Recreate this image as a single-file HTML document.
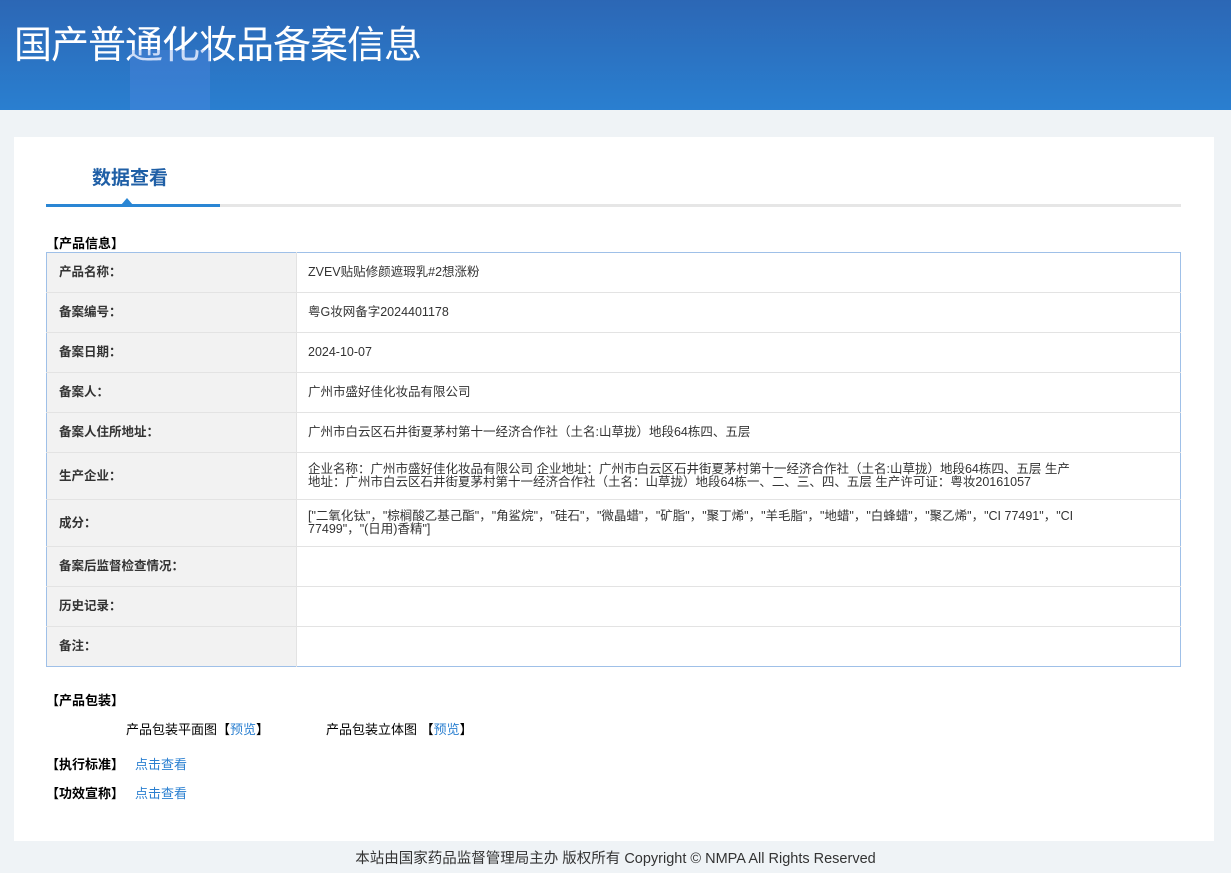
<!DOCTYPE html>
<html><head><meta charset="utf-8"><style>
*{margin:0;padding:0;box-sizing:border-box}
body{width:1231px;height:873px;background:#eff3f6;font-family:"Liberation Sans","Noto Sans CJK SC",sans-serif;font-size:13px;color:#333;position:relative;overflow:hidden}
.hd{position:absolute;left:0;top:0;width:1231px;height:110px;background:linear-gradient(180deg,#2c67b5 0%,#2a7fd0 100%);overflow:hidden}
.hd h1{position:absolute;left:14px;top:14px;font-size:38px;font-weight:normal;color:#fff;letter-spacing:-1px;font-family:"Noto Sans CJK SC",sans-serif}
.panel{position:absolute;left:14px;top:137px;width:1200px;height:704px;background:#fff}
.tab{position:absolute;left:92px;top:163px;font-size:19px;font-weight:bold;color:#1f5fa6}
.line{position:absolute;left:46px;top:204px;width:1135px;height:3px;background:#e6e6e6}
.line i{position:absolute;left:0;top:0;width:174px;height:3px;background:#2a86d4}
.tri{position:absolute;left:121px;top:198px;width:0;height:0;border-left:6px solid transparent;border-right:6px solid transparent;border-bottom:7px solid #2a86d4}
.sec{position:absolute;font-weight:bold;color:#000;font-size:13px}
table{position:absolute;left:46px;top:252px;width:1135px;border-collapse:collapse;border:1px solid #9fc0e8}
td{border-bottom:1px solid #e3e3e3;height:40px;vertical-align:middle;font-size:12.5px;line-height:13px}
td.l{width:250px;background:#f2f2f2;font-weight:bold;padding-left:12px;color:#333;border-right:1px solid #e3e3e3}
td.v{padding-left:11px;padding-right:100px;color:#333}
a{color:#2a7fd0;text-decoration:none}
.ft{position:absolute;left:0;top:847px;width:1231px;text-align:center;font-size:14.5px;color:#333}
</style></head><body>
<div class="hd"><h1>国产普通化妆品备案信息</h1>
<div style="position:absolute;left:130px;top:50px;width:80px;height:70px;background:rgba(90,140,230,.3)"></div>
</div>
<div class="panel"></div>
<div class="tab">数据查看</div>
<div class="line"><i></i></div>
<div class="tri"></div>
<div class="sec" style="left:46px;top:233px">【产品信息】</div>
<table>
<tr><td class="l">产品名称：</td><td class="v">ZVEV贴贴修颜遮瑕乳#2想涨粉</td></tr>
<tr><td class="l">备案编号：</td><td class="v">粤G妆网备字2024401178</td></tr>
<tr><td class="l">备案日期：</td><td class="v">2024-10-07</td></tr>
<tr><td class="l">备案人：</td><td class="v">广州市盛好佳化妆品有限公司</td></tr>
<tr><td class="l">备案人住所地址：</td><td class="v">广州市白云区石井街夏茅村第十一经济合作社（土名:山草拢）地段64栋四、五层</td></tr>
<tr><td class="l" style="height:47px">生产企业：</td><td class="v">企业名称：广州市盛好佳化妆品有限公司 企业地址：广州市白云区石井街夏茅村第十一经济合作社（土名:山草拢）地段64栋四、五层 生产地址：广州市白云区石井街夏茅村第十一经济合作社（土名：山草拢）地段64栋一、二、三、四、五层 生产许可证：粤妆20161057</td></tr>
<tr><td class="l" style="height:47px">成分：</td><td class="v">["二氧化钛"，"棕榈酸乙基己酯"，"角鲨烷"，"硅石"，"微晶蜡"，"矿脂"，"聚丁烯"，"羊毛脂"，"地蜡"，"白蜂蜡"，"聚乙烯"，"CI 77491"，"CI 77499"，"(日用)香精"]</td></tr>
<tr><td class="l">备案后监督检查情况：</td><td class="v"></td></tr>
<tr><td class="l">历史记录：</td><td class="v"></td></tr>
<tr><td class="l" style="border-bottom:none">备注：</td><td class="v" style="border-bottom:none"></td></tr>
</table>
<div class="sec" style="left:46px;top:690px">【产品包装】</div>
<div style="position:absolute;left:126px;top:719px;color:#000">产品包装平面图【<a>预览</a>】</div>
<div style="position:absolute;left:326px;top:719px;color:#000">产品包装立体图 【<a>预览</a>】</div>
<div class="sec" style="left:46px;top:754px">【执行标准】</div><a style="position:absolute;left:135px;top:754px">点击查看</a>
<div class="sec" style="left:46px;top:783px">【功效宣称】</div><a style="position:absolute;left:135px;top:783px">点击查看</a>
<div class="ft">本站由国家药品监督管理局主办 版权所有 Copyright © NMPA All Rights Reserved</div>
</body></html>
